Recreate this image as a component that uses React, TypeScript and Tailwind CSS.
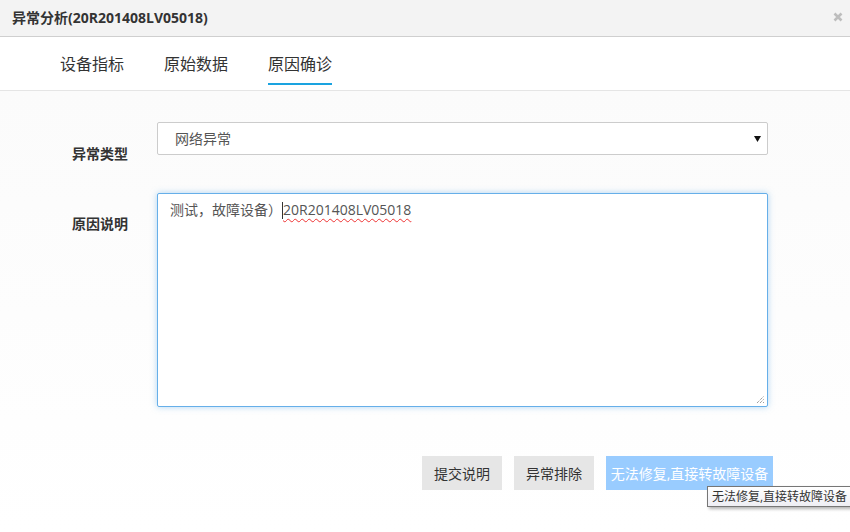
export default function App() {
  const font = { fontFamily: '"Open Sans", "Noto Sans CJK SC", sans-serif' }
  return (
    <div className="relative h-[532px] w-[850px] overflow-hidden bg-white text-[#333]" style={font}>
      {/* header */}
      <div className="flex h-[37px] items-center justify-between border-b border-[#cfcfcf] bg-[#f3f3f3] pl-[12px] pr-[7px]">
        <span className="text-[14px] font-bold leading-none">异常分析(20R201408LV05018)</span>
        <svg width="10" height="10" viewBox="0 0 10 10" className="mb-[3px]">
          <path d="M1.5 1.5 L8.5 8.5 M8.5 1.5 L1.5 8.5" stroke="#bdbdbd" strokeWidth="2.6" />
        </svg>
      </div>

      {/* tabs */}
      <div className="flex h-[54px] gap-[40px] border-b border-[#e5e5e5] pl-[60px]">
        <div className="flex items-center pt-[1px] text-[16px]">设备指标</div>
        <div className="flex items-center pt-[1px] text-[16px]">原始数据</div>
        <div className="relative flex items-center pt-[1px] text-[16px]">
          原因确诊
          <div className="absolute bottom-[5px] left-0 right-0 h-[2px] bg-[#1aa3e0]" />
        </div>
      </div>

      {/* body */}
      <div className="bg-gradient-to-b from-[#fbfbfb] to-white pb-[42px] pl-[72px] pt-[31px]">
        <div className="flex h-[33px]">
          <div className="w-[85px] pt-[22px] text-[14px] font-bold leading-[20px]">异常类型</div>
          <div className="flex h-[33px] w-[611px] items-center justify-between rounded-[2px] border border-[#ccc] bg-white pl-[17px] pr-[6px]">
            <span className="text-[14px] text-[#555]">网络异常</span>
            <svg width="7" height="6" viewBox="0 0 7 6">
              <path d="M0 0 L7 0 L3.5 6 Z" fill="#111" />
            </svg>
          </div>
        </div>

        <div className="mt-[38px] flex">
          <div className="w-[85px] pt-[21px] text-[14px] font-bold leading-[20px]">原因说明</div>
          <div className="relative h-[214px] w-[611px] rounded-[2px] border border-[#66afe9] bg-white pl-[12px] pt-[6px] shadow-[0_0_6px_rgba(102,175,233,0.5)]">
            <div className="flex items-center text-[14px] leading-[20px] text-[#555] [text-spacing-trim:space-all]">
              <span>测试，故障设备）</span>
              <span className="inline-block h-[17px] w-px bg-[#333]" />
              <span className="underline decoration-[#e33] decoration-wavy decoration-1 underline-offset-[3px]">20R201408LV05018</span>
            </div>
            <svg width="9" height="9" viewBox="0 0 9 9" className="absolute bottom-[2px] right-[2px]">
              <path d="M1 8 L8 1 M4 8 L8 4 M7 8 L8 7" stroke="#777" strokeWidth="1" strokeDasharray="1 1" />
            </svg>
          </div>
        </div>

        <div className="mt-[49px] flex gap-[12px] pl-[350px]">
          <div className="flex h-[34px] w-[80px] items-center justify-center bg-[#e6e6e6] text-[14px]">提交说明</div>
          <div className="flex h-[34px] w-[80px] items-center justify-center bg-[#e6e6e6] text-[14px]">异常排除</div>
          <div className="flex h-[34px] w-[167px] items-center justify-center bg-[#99ccff] text-[14px] text-white">无法修复,直接转故障设备</div>
        </div>
      </div>

      {/* tooltip */}
      <div className="absolute left-[707px] top-[486px] flex h-[21px] items-center whitespace-nowrap border border-[#767676] bg-gradient-to-b from-white to-[#eeeef4] pl-[4px] pr-[3px] text-[12px] text-[#333] shadow-[2px_2px_3px_rgba(0,0,0,0.3)]">
        无法修复,直接转故障设备
      </div>
    </div>
  )
}
